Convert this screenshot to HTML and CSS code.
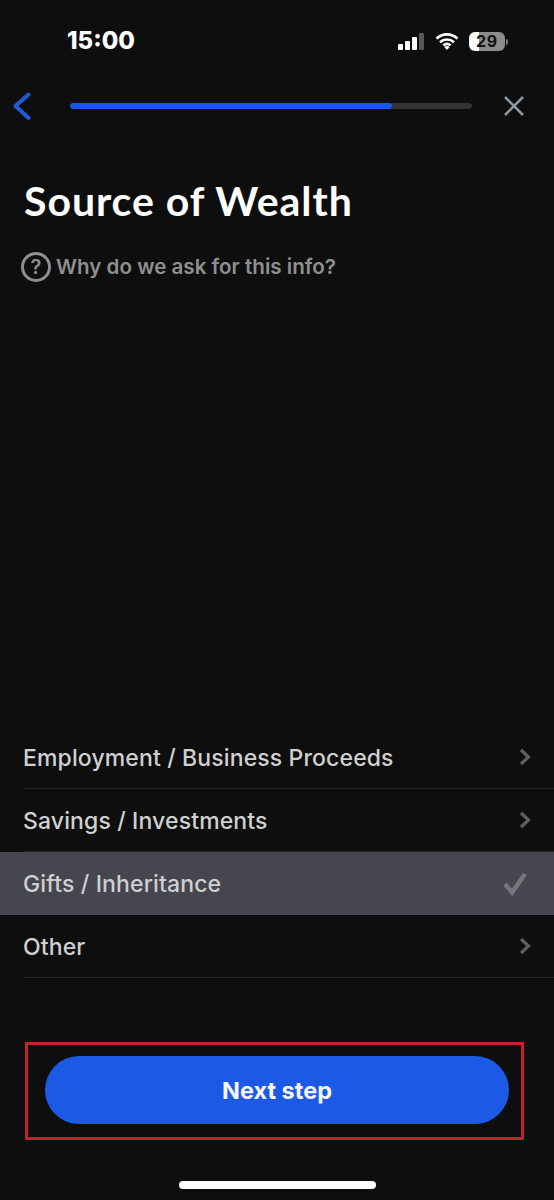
FILE: index.html
```html
<!DOCTYPE html>
<html lang="en">
<head>
<meta charset="utf-8">
<title>Source of Wealth</title>
<link rel="stylesheet" href="styles.css">
</head>
<body>
<main class="screen">
  <div class="status">
    <span class="time">15:00</span>
    <div class="status-icons">
      <svg class="signal" width="29" height="18" viewBox="0 0 29 18"><rect x="1" y="11" width="5" height="6" rx="1" fill="#fff"/><rect x="8" y="8" width="5" height="9" rx="1" fill="#fff"/><rect x="15" y="4" width="5" height="13" rx="1" fill="#fff"/><rect x="22" y="0" width="5" height="17" rx="1" fill="#55575a"/></svg>
      <svg class="wifi" width="24" height="18" viewBox="0 0 24 18"><path d="M1.5 6.6C7.5 1 16.5 1 22.5 6.6M5 10.2c4-3.7 10-3.7 14 0M8.4 13.4c2.100-1.800 5.100-1.800 7.200 0" fill="none" stroke="#fff" stroke-width="2.600"/><path d="M12 18l-2.600-3c1.500-1.200 3.700-1.200 5.200 0z" fill="#fff"/></svg>
      <div class="battery-wrap">
        <div class="battery"><span class="battery-num">29</span></div>
        <span class="battery-nub"></span>
      </div>
    </div>
  </div>

  <nav class="nav">
    <svg class="back" width="20" height="32" viewBox="0 0 20 32"><path d="M17.500 4.500L4.500 16L17.500 28" fill="none" stroke="#2159d6" stroke-width="4" stroke-linecap="round" stroke-linejoin="round"/></svg>
    <div class="track"><div class="fill"></div></div>
    <svg class="close" width="22" height="22" viewBox="0 0 22 22"><path d="M2 2L20 20M20 2L2 20" fill="none" stroke="#8b979f" stroke-width="2.600"/></svg>
  </nav>

  <h1 class="title">Source of Wealth</h1>

  <div class="why">
    <span class="why-icon">?</span>
    <span class="why-text">Why do we ask for this info?</span>
  </div>

  <ul class="options">
    <li class="option"><span class="label">Employment / Business Proceeds</span><svg class="chev" width="12" height="18" viewBox="0 0 12 18"><path d="M2 2L9.500 9L2 16" fill="none" stroke="#5f5f62" stroke-width="3.200"/></svg></li>
    <li class="option"><span class="label">Savings / Investments</span><svg class="chev" width="12" height="18" viewBox="0 0 12 18"><path d="M2 2L9.500 9L2 16" fill="none" stroke="#5f5f62" stroke-width="3.200"/></svg></li>
    <li class="option selected"><span class="label">Gifts / Inheritance</span><svg class="check" width="26" height="24" viewBox="0 0 26 24"><path d="M4 12L11 20.500L24 2" fill="none" stroke="#77777b" stroke-width="4.500"/></svg></li>
    <li class="option"><span class="label">Other</span><svg class="chev" width="12" height="18" viewBox="0 0 12 18"><path d="M2 2L9.500 9L2 16" fill="none" stroke="#5f5f62" stroke-width="3.200"/></svg></li>
  </ul>

  <div class="highlight">
    <button class="next" type="button">Next step</button>
  </div>

  <div class="home"></div>
</main>
</body>
</html>
```
FILE: styles.css
```css
* { box-sizing: border-box; }
html, body { margin: 0; padding: 0; background: #0e0e0f; }
.screen {
  width: 554px;
  height: 1200px;
  display: flex;
  flex-direction: column;
  background: #0e0e0f;
  font-family: Inter, "Liberation Sans", sans-serif;
  overflow: hidden;
}
.status {
  height: 84px;
  padding: 27px 46px 0 67px;
  display: flex;
  justify-content: space-between;
  align-items: flex-start;
}
.time { color: #fff; font-size: 24px; font-weight: 800; line-height: 28px; }
.status-icons { display: flex; align-items: center; gap: 9px; padding-top: 5px; }
.wifi { margin-top: -1px; }
.battery-wrap { display: flex; align-items: center; gap: 1px; margin-left: 1px; }
.battery {
  width: 36px;
  height: 19px;
  border-radius: 6px;
  background: linear-gradient(90deg, #fff 0 29%, #8c8c8c 29% 100%);
  display: flex;
  align-items: center;
  justify-content: center;
}
.battery-num { color: #141414; font-size: 16px; font-weight: 700; line-height: 19px; letter-spacing: 0.8px; }
.battery-nub { width: 2px; height: 6px; border-radius: 0 2px 2px 0; background: #77777a; }
.nav {
  height: 44px;
  padding: 0 30px 0 11px;
  display: flex;
  align-items: center;
}
.back { flex: none; }
.track {
  flex: none;
  width: 402px;
  height: 6px;
  margin: 0 31px 0 39px;
  border-radius: 3px;
  background: #333336;
  overflow: hidden;
}
.fill { width: 322px; height: 100%; border-radius: 3px; background: #1a56e8; }
.close { flex: none; }
.title {
  margin: 49px 0 0 24px;
  color: #fff;
  font-family: Lato, "Liberation Sans", sans-serif;
  font-size: 41px;
  font-weight: 700;
  line-height: 48px;
  letter-spacing: 0.95px;
}
.why { margin: 27px 0 0 21px; display: flex; align-items: center; gap: 5px; }
.why-icon {
  width: 30px;
  height: 30px;
  border: 3px solid #8f8f8f;
  border-radius: 50%;
  color: #8f8f8f;
  font-size: 20px;
  font-weight: 600;
  line-height: 24px;
  text-align: center;
}
.why-text { color: #8f8f8f; font-size: 20.6px; font-weight: 600; line-height: 30px; }
.options { list-style: none; margin: 444px 0 0; padding: 0; }
.option {
  height: 63px;
  margin-left: 23px;
  padding-right: 23px;
  border-bottom: 1px solid #222224;
  display: flex;
  align-items: center;
  justify-content: space-between;
}
.label { color: #d0d0d0; font-size: 23px; font-weight: 500; line-height: 28px; letter-spacing: 0.13px; padding-top: 1px; }
.selected {
  margin-left: 0;
  padding: 0 27px 0 23px;
  background: #45464e;
  border-bottom: 0;
}
.selected .label { color: #cfcfd2; padding-top: 0; }
.highlight {
  margin: 64px 30px 0 25px;
  height: 98px;
  border: 3px solid #c0242f;
  padding: 11px 12px 0 17px;
}
.next {
  display: block;
  width: 464px;
  height: 68px;
  padding: 1px 0 0;
  border: 0;
  border-radius: 34px;
  background: #1c5ae6;
  color: #f4f6fb;
  font-family: Inter, "Liberation Sans", sans-serif;
  font-size: 23.5px;
  font-weight: 700;
}
.home {
  width: 197px;
  height: 8px;
  margin: 41px 0 0 179px;
  border-radius: 4px;
  background: #fff;
}
```
